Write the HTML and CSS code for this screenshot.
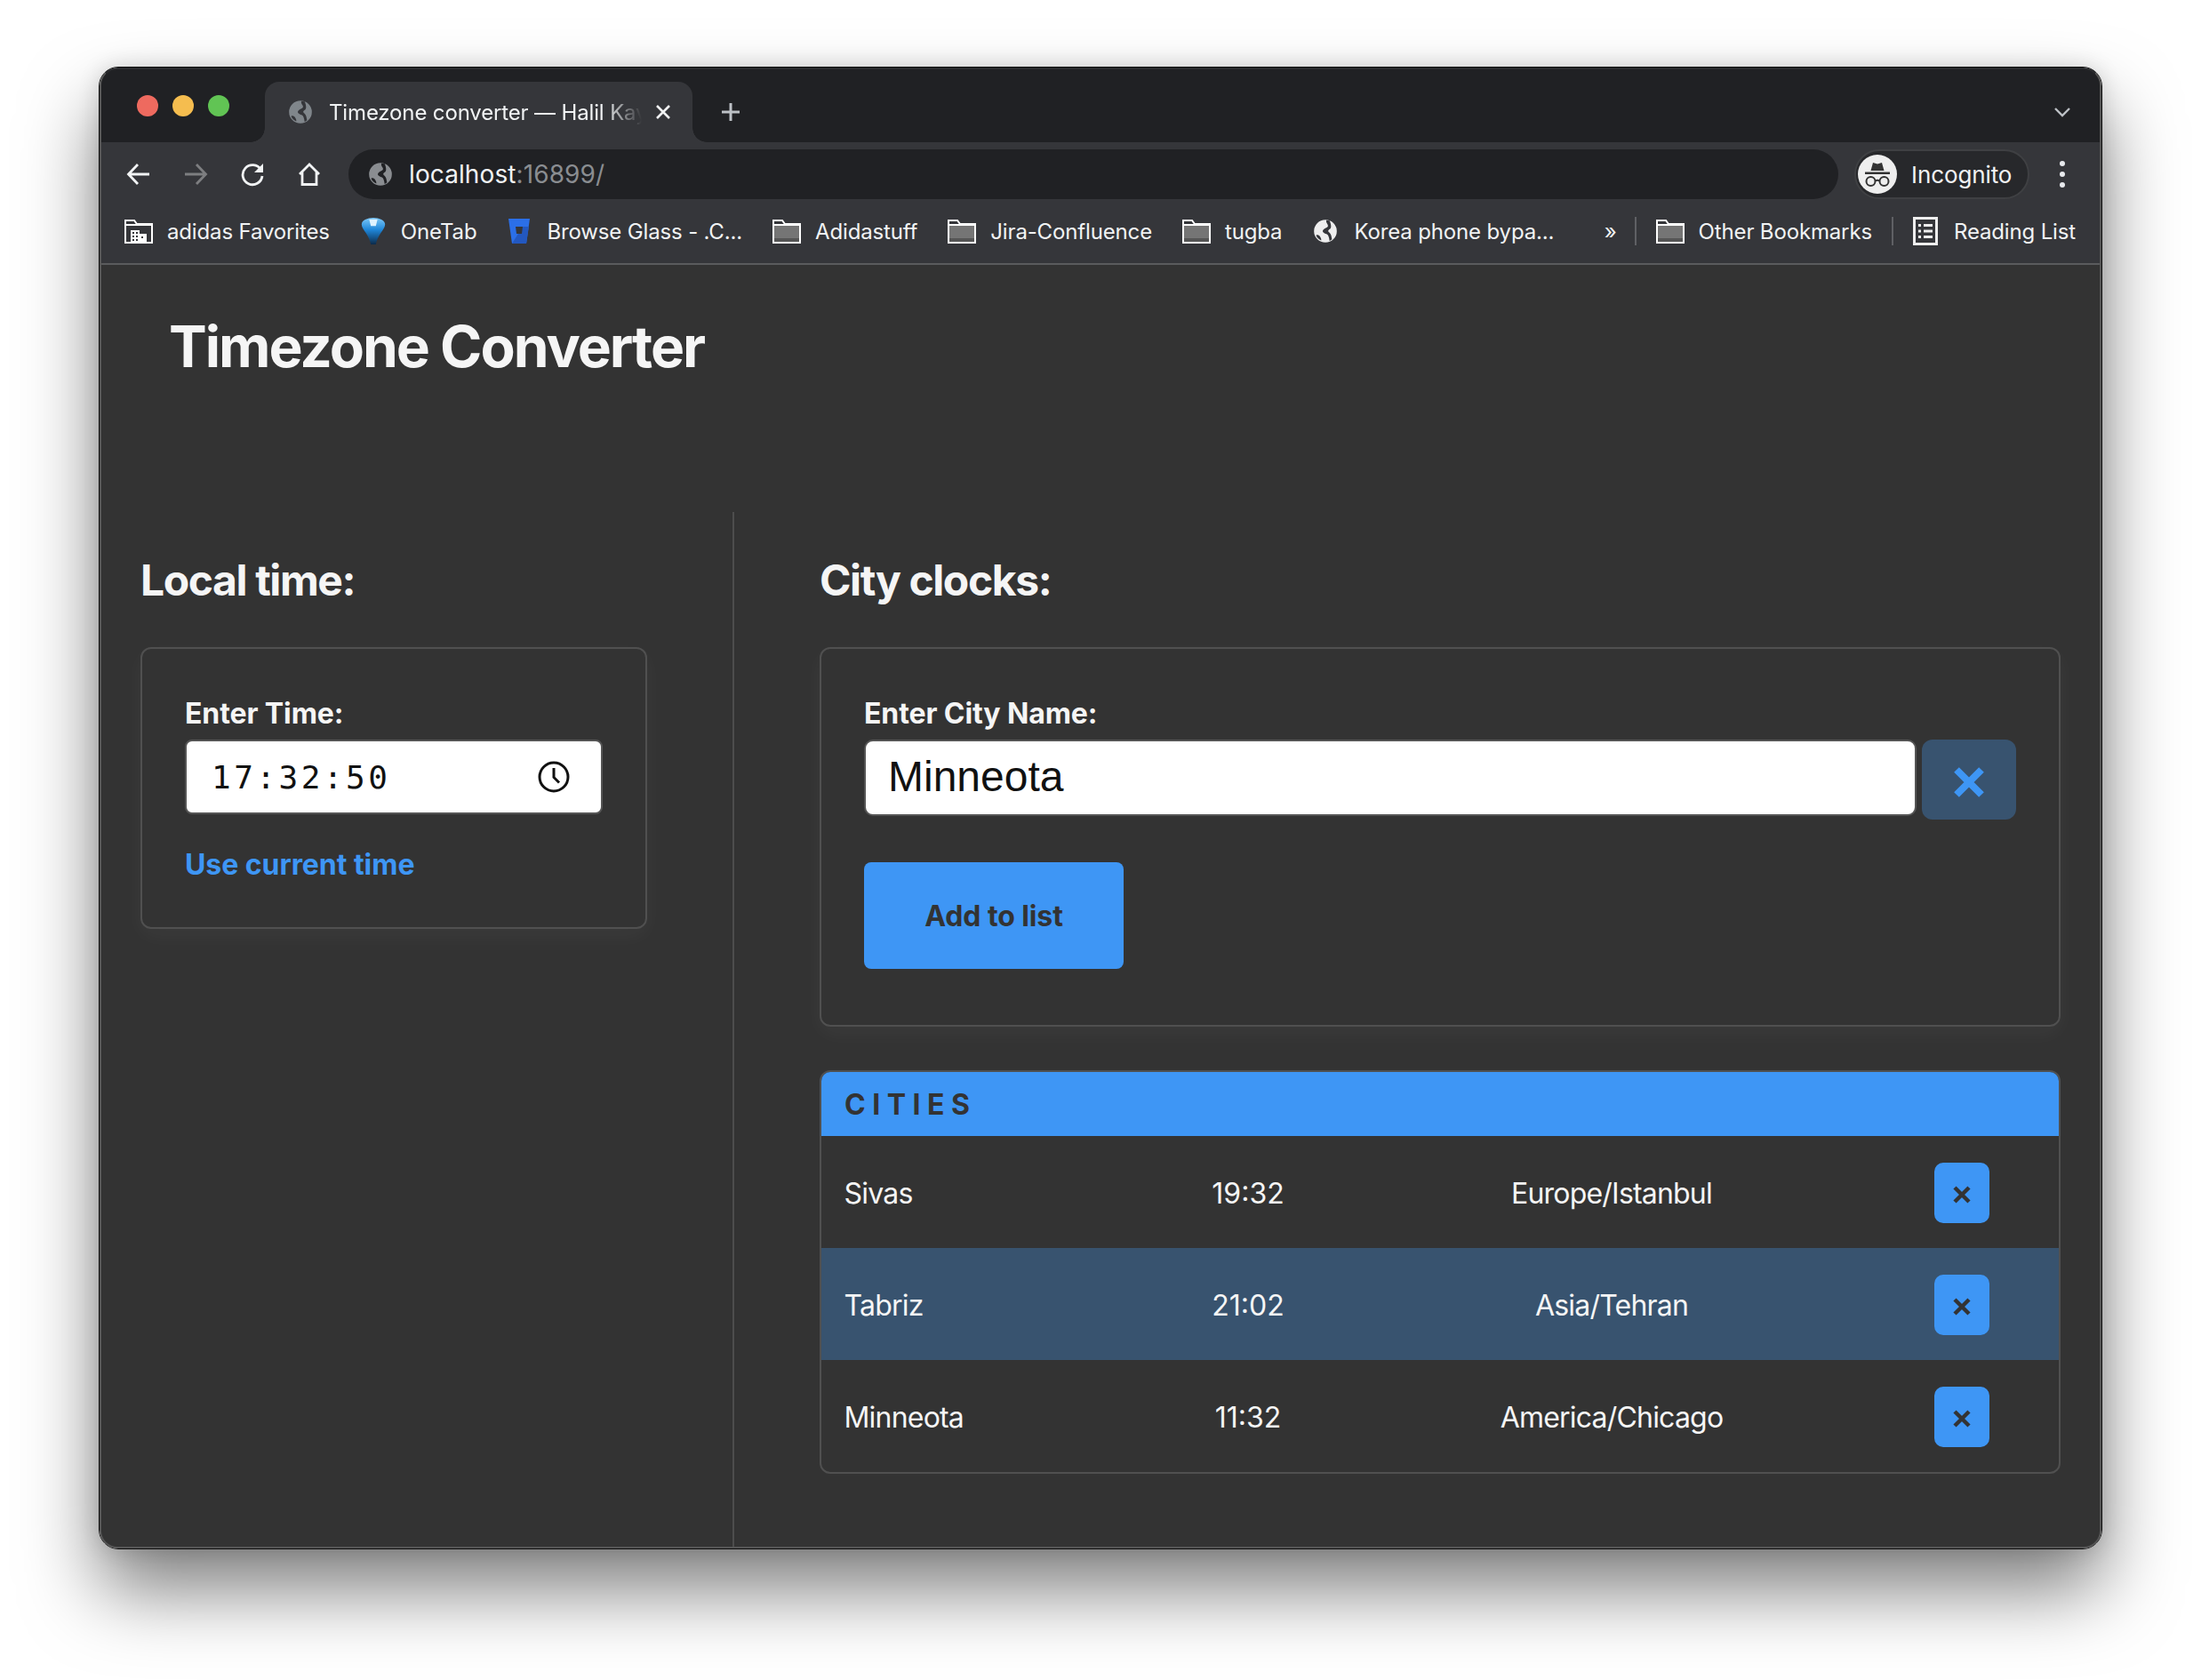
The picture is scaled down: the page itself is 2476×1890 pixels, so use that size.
FILE: index.html
```html
<!DOCTYPE html>
<html lang="en">

<head>
    <meta charset="UTF-8">
    <title>Timezone converter</title>
    <link rel="stylesheet" href="styles.css">
</head>

<body>
    <svg class="defs" width="0" height="0">
        <defs>
            <symbol id="globe" viewBox="0 0 24 24">
                <path fill="currentColor" fill-rule="evenodd" d="M12 1a11 11 0 1 0 0 22a11 11 0 0 0 0-22z M13 1.500C12 4 14.500 5 14.500 7C14.500 8.500 10.500 9 9.500 11.500C9 13.500 12 14.300 13.500 15C15 16 15.500 18 16 21.500C17 21 17.600 20.600 18.300 20C18 17.500 17.500 15 16 13.500C14 12 14.500 11 16.500 9.800C18 8.800 17.500 5 16 2C15 1.700 14 1.600 13 1.500z M3 16C5 15 6 16 7 17.500C8 19 8 20 8 21C5.800 20 4 18.300 3 16z" />
            </symbol>
            <symbol id="folder" viewBox="0 0 32 28">
                <path fill="#757575" d="M2 8h28v18H2z" />
                <path fill="#555" d="M2 22h28v4H2z" />
                <path fill="none" stroke="#fff" stroke-width="2" d="M1 2h10l3 4h17v21H1z M1 7h30" />
            </symbol>
            <linearGradient id="gem" x1="0" y1="0" x2="0" y2="1">
                <stop offset="0" stop-color="#7cc8f8" />
                <stop offset=".45" stop-color="#1f86d8" />
                <stop offset="1" stop-color="#0b2a4a" />
            </linearGradient>
        </defs>
    </svg>

    <div class="window">
        <div class="window-inner">

            <div class="tabstrip">
                <div class="lights">
                    <span class="light red"></span>
                    <span class="light yellow"></span>
                    <span class="light green"></span>
                </div>
                <div class="tab">
                    <svg class="tab-icon"><use href="#globe" /></svg>
                    <span class="tab-title">Timezone converter — Halil Kay</span>
                    <svg class="tab-close" viewBox="0 0 18 18"><path d="M2 2l14 14M16 2L2 16" /></svg>
                </div>
                <div class="new-tab">
                    <svg viewBox="0 0 24 24"><path d="M12 2v20M2 12h20" /></svg>
                </div>
                <div class="tab-menu">
                    <svg viewBox="0 0 20 12"><path d="M2 2l8 8l8-8" /></svg>
                </div>
            </div>

            <div class="toolbar">
                <div class="tool">
                    <svg viewBox="0 0 28 28"><path d="M27 14H4M14 3L3.500 14L14 25" /></svg>
                </div>
                <div class="tool dim">
                    <svg viewBox="0 0 28 28"><path d="M2 14h23M15 3l10.500 11L15 25" /></svg>
                </div>
                <div class="tool">
                    <svg viewBox="0 0 28 28"><path d="M23.500 9A11 11 0 1 0 25 16" /><path class="solid" d="M26 2v10H16z" /></svg>
                </div>
                <div class="tool">
                    <svg viewBox="0 0 28 28"><path d="M2 14L13 3l11 11M5 11.500v14h16v-14" /></svg>
                </div>
                <div class="omnibox">
                    <svg class="omni-icon"><use href="#globe" /></svg>
                    <span class="url">localhost<span class="url-dim">:16899/</span></span>
                </div>
                <div class="profile">
                    <svg class="profile-icon" viewBox="0 0 44 44">
                        <circle cx="22" cy="22" r="22" fill="#eee" />
                        <path fill="#333" d="M14.500 18l2.500-9l5 1.500l5-1.500l2.500 9z" />
                        <path fill="#333" d="M8 19.500h28v2.500H8z" />
                        <g fill="none" stroke="#333" stroke-width="2">
                            <circle cx="14.500" cy="30" r="5" />
                            <circle cx="29.500" cy="30" r="5" />
                            <path d="M19.500 29.500q2.500-1.500 5 0" />
                        </g>
                    </svg>
                    <span>Incognito</span>
                </div>
                <div class="more">
                    <span></span><span></span><span></span>
                </div>
            </div>

            <div class="bookmarks">
                <div class="mark">
                    <svg class="mark-icon" viewBox="0 0 32 28">
                        <path fill="none" stroke="#fff" stroke-width="2" d="M1 2h10l3 4h17v21H1z M1 7h30" />
                        <path fill="#fff" d="M7 13h10v4h8v10H7z" />
                        <path fill="#35363a" d="M9 15h2v2H9zM13 15h2v2h-2zM9 19h2v2H9zM13 19h2v2h-2zM9 23h2v2H9zM13 23h2v2h-2zM19 20h2v2h-2z" />
                    </svg>
                    <span>adidas Favorites</span>
                </div>
                <div class="mark">
                    <svg class="mark-icon gem" viewBox="0 0 30 34">
                        <path fill="url(#gem)" d="M1 9C1 4 8 1 15 1s14 3 14 8c0 6-9 12-11 24h-6C10 21 1 15 1 9z" />
                        <path fill="#dff3ff" d="M10 3h10l-2 8h-6z" />
                    </svg>
                    <span>OneTab</span>
                </div>
                <div class="mark">
                    <svg class="mark-icon bucket" viewBox="0 0 26 32">
                        <path fill="#2b6fe8" d="M1 2h24l-4 28H5z" />
                        <path fill="#2358c0" d="M17 11h7l-3 19H5z" />
                        <path fill="#35363a" d="M9 11h8l-1 8h-6z" />
                    </svg>
                    <span>Browse Glass - .C...</span>
                </div>
                <div class="mark">
                    <svg class="mark-icon"><use href="#folder" /></svg>
                    <span>Adidastuff</span>
                </div>
                <div class="mark">
                    <svg class="mark-icon"><use href="#folder" /></svg>
                    <span>Jira-Confluence</span>
                </div>
                <div class="mark">
                    <svg class="mark-icon"><use href="#folder" /></svg>
                    <span>tugba</span>
                </div>
                <div class="mark">
                    <svg class="mark-icon globe-mark"><use href="#globe" /></svg>
                    <span>Korea phone bypa...</span>
                </div>
                <div class="marks-end">
                    <span class="chevrons">»</span>
                    <span class="mark-sep"></span>
                    <div class="mark">
                        <svg class="mark-icon"><use href="#folder" /></svg>
                        <span>Other Bookmarks</span>
                    </div>
                    <span class="mark-sep"></span>
                    <div class="mark">
                        <svg class="mark-icon list-icon" viewBox="0 0 28 32">
                            <path fill="none" stroke="#eee" stroke-width="3" d="M1.500 1.500h25v29h-25z" />
                            <path fill="#eee" d="M6 8h3v3H6zM12 8h10v3H12zM6 14.500h3v3H6zM12 14.500h10v3H12zM6 21h3v3H6zM12 21h10v3H12z" />
                        </svg>
                        <span>Reading List</span>
                    </div>
                </div>
            </div>

            <main class="content">
                <h1 class="title">Timezone Converter</h1>
                <div class="columns">
                    <section class="col-local">
                        <h2>Local time:</h2>
                        <div class="card card-local">
                            <div class="label">Enter Time:</div>
                            <div class="time-field">
                                <span class="time-value">17:32:50</span>
                                <svg class="clock" viewBox="0 0 36 36">
                                    <circle cx="18" cy="18" r="16" />
                                    <path d="M18 8v10.500l6 6" />
                                </svg>
                            </div>
                            <a class="link" href="#">Use current time</a>
                        </div>
                    </section>

                    <section class="col-cities">
                        <h2>City clocks:</h2>
                        <div class="card card-city">
                            <div class="label">Enter City Name:</div>
                            <div class="city-row">
                                <div class="city-field">Minneota</div>
                                <button class="clear-btn">
                                    <svg viewBox="0 0 34 34"><path d="M3 3l28 28M31 3L3 31" /></svg>
                                </button>
                            </div>
                            <button class="add-btn">Add to list</button>
                        </div>

                        <div class="list">
                            <div class="list-head">CITIES</div>
                            <div class="list-row">
                                <span>Sivas</span>
                                <span class="hour">19:32</span>
                                <span class="zone">Europe/Istanbul</span>
                                <button class="del-btn"><svg viewBox="0 0 20 20"><path d="M2 2l16 16M18 2L2 18" /></svg></button>
                            </div>
                            <div class="list-row alt">
                                <span>Tabriz</span>
                                <span class="hour">21:02</span>
                                <span class="zone">Asia/Tehran</span>
                                <button class="del-btn"><svg viewBox="0 0 20 20"><path d="M2 2l16 16M18 2L2 18" /></svg></button>
                            </div>
                            <div class="list-row">
                                <span>Minneota</span>
                                <span class="hour">11:32</span>
                                <span class="zone">America/Chicago</span>
                                <button class="del-btn"><svg viewBox="0 0 20 20"><path d="M2 2l16 16M18 2L2 18" /></svg></button>
                            </div>
                        </div>
                    </section>
                </div>
            </main>

        </div>
    </div>
</body>

</html>
```

FILE: styles.css
```css
* {
    box-sizing: border-box;
}

html,
body {
    margin: 0;
    background: #fff;
}

body {
    width: 2476px;
    height: 1890px;
    padding: 75px 111px 147px;
    font-family: Inter, "Noto Sans", sans-serif;
    overflow: hidden;
}

.defs {
    display: block;
    height: 0;
}

/* window frame */
.window {
    height: 100%;
    border: 1px solid #0c0c0c;
    border-radius: 22px;
    box-shadow: 0 46px 84px rgba(0, 0, 0, 0.5), 0 0 24px rgba(0, 0, 0, 0.14);
}

.window-inner {
    height: 100%;
    display: flex;
    flex-direction: column;
    border: 2px solid #555;
    border-top-color: #2a2b2e;
    border-radius: 20px;
    overflow: hidden;
    background: #333;
}

/* tab strip */
.tabstrip {
    height: 82px;
    display: flex;
    background: #202124;
    flex-shrink: 0;
}

.lights {
    width: 184px;
    padding: 29px 0 0 40px;
    display: flex;
    gap: 16px;
}

.light {
    width: 24px;
    height: 24px;
    border-radius: 50%;
}

.red {
    background: #ee6a5f;
}

.yellow {
    background: #f5bd4f;
}

.green {
    background: #61c454;
}

.tab {
    position: relative;
    width: 481px;
    height: 68px;
    margin-top: 14px;
    padding-left: 26px;
    display: flex;
    align-items: center;
    background: #35363a;
    border-radius: 16px 16px 0 0;
}

.tab::before,
.tab::after {
    content: "";
    position: absolute;
    bottom: 0;
    width: 16px;
    height: 16px;
}

.tab::before {
    left: -16px;
    background: radial-gradient(circle at 0 0, transparent 15.5px, #35363a 16px);
}

.tab::after {
    right: -16px;
    background: radial-gradient(circle at 100% 0, transparent 15.5px, #35363a 16px);
}

.tab-icon {
    width: 28px;
    height: 28px;
    color: #80868b;
    flex-shrink: 0;
}

.tab-title {
    width: 352px;
    margin-left: 18px;
    color: #f1f3f4;
    font-size: 24px;
    letter-spacing: -0.15px;
    white-space: nowrap;
    overflow: hidden;
    -webkit-mask-image: linear-gradient(to right, #000 88%, transparent 100%);
    mask-image: linear-gradient(to right, #000 88%, transparent 100%);
}

.tab-close {
    width: 18px;
    height: 18px;
    margin-left: 15px;
    fill: none;
    stroke: #f1f3f4;
    stroke-width: 2.600;
}

.new-tab {
    width: 40px;
    height: 68px;
    margin: 14px 0 0 23px;
    display: flex;
    align-items: center;
    justify-content: center;
}

.new-tab svg {
    width: 24px;
    height: 24px;
    fill: none;
    stroke: #bdc1c6;
    stroke-width: 3;
}

.tab-menu {
    width: 40px;
    height: 68px;
    margin: 14px 22px 0 auto;
    display: flex;
    align-items: center;
    justify-content: center;
}

.tab-menu svg {
    width: 20px;
    height: 12px;
    fill: none;
    stroke: #bdc1c6;
    stroke-width: 2.400;
}

/* toolbar */
.toolbar {
    height: 72px;
    padding: 8px 5px 0 9px;
    display: flex;
    align-items: flex-start;
    background: #35363a;
    flex-shrink: 0;
}

.tool {
    width: 64.500px;
    height: 56px;
    display: flex;
    align-items: center;
    justify-content: center;
}

.tool svg {
    width: 28px;
    height: 28px;
    fill: none;
    stroke: #f1f3f4;
    stroke-width: 2.800;
}

.tool .solid {
    fill: #f1f3f4;
    stroke: none;
}

.tool.dim svg {
    stroke: #7d7e80;
}

.omnibox {
    flex: 1;
    height: 56px;
    margin-left: 11px;
    padding-left: 22px;
    display: flex;
    align-items: center;
    background: #202124;
    border-radius: 28px;
}

.omni-icon {
    width: 28px;
    height: 28px;
    color: #8a8d91;
    flex-shrink: 0;
}

.url {
    margin-left: 18px;
    color: #f1f3f4;
    font-size: 28px;
    letter-spacing: 0.1px;
}

.url-dim {
    color: #8a8d91;
}

.profile {
    width: 197px;
    height: 56px;
    margin-left: 18px;
    padding-left: 2px;
    display: flex;
    align-items: center;
    gap: 16px;
    color: #f1f3f4;
    font-size: 26px;
    letter-spacing: -0.1px;
    background: #27282b;
    border: 2px solid #3f4043;
    border-radius: 28px;
}

.profile-icon {
    width: 44px;
    height: 44px;
    flex-shrink: 0;
}

.more {
    width: 74px;
    height: 56px;
    display: flex;
    flex-direction: column;
    align-items: center;
    justify-content: center;
    gap: 6px;
}

.more span {
    width: 6px;
    height: 6px;
    border-radius: 50%;
    background: #e8eaed;
}

/* bookmarks */
.bookmarks {
    height: 66px;
    padding: 0 27px 8px 26px;
    display: flex;
    align-items: center;
    gap: 34px;
    color: #f1f3f4;
    font-size: 24px;
    letter-spacing: -0.15px;
    background: #35363a;
    border-bottom: 2px solid #5a5b5d;
    flex-shrink: 0;
}

.mark {
    display: flex;
    align-items: center;
    gap: 16px;
    white-space: nowrap;
}

.mark-icon {
    width: 32px;
    height: 28px;
    flex-shrink: 0;
}

.mark-icon.gem {
    width: 30px;
    height: 32px;
}

.mark-icon.bucket {
    width: 26px;
    height: 32px;
    margin: 0 2px 0 1px;
}

.mark-icon.globe-mark {
    width: 28px;
    height: 28px;
    margin: 0 2px 0 1px;
    color: #eee;
}

.mark-icon.list-icon {
    width: 28px;
    height: 32px;
    margin-right: 2px;
}

.marks-end {
    margin-left: auto;
    display: flex;
    align-items: center;
    gap: 22px;
}

.chevrons {
    margin-right: -2px;
    font-size: 24px;
}

.mark-sep {
    width: 2px;
    height: 32px;
    background: #5f6064;
}

/* page */
.content {
    flex: 1;
    display: flex;
    flex-direction: column;
    min-height: 0;
    color: #f5f5f5;
}

.title {
    margin: 0;
    padding: 54px 76px 148px;
    font-size: 64px;
    line-height: 76px;
    font-weight: 700;
    letter-spacing: -2px;
}

.columns {
    flex: 1;
    display: flex;
    min-height: 0;
}

.col-local {
    width: 712px;
    padding: 48px 0 0 44px;
    border-right: 2px solid #4d4d4d;
}

.col-cities {
    flex: 1;
    padding: 48px 44px 0 96px;
}

h2 {
    margin: 0 0 46px;
    font-size: 48px;
    line-height: 58px;
    font-weight: 700;
    letter-spacing: -1.400px;
}

.card {
    border: 2px solid #505050;
    border-radius: 12px;
    box-shadow: 0 8px 24px rgba(255, 255, 255, 0.04);
}

.card-local {
    width: 570px;
    padding: 53px 49px 50px 48px;
}

.card-city {
    padding: 53px 48px 63px 48px;
}

.label {
    margin-bottom: 9px;
    font-size: 32px;
    line-height: 40px;
    font-weight: 700;
    letter-spacing: -0.1px;
}

.time-field {
    width: 470px;
    height: 84px;
    padding: 0 35px 0 28px;
    display: flex;
    align-items: center;
    justify-content: space-between;
    background: #fff;
    border: 2px solid #555;
    border-radius: 8px;
}

.time-value {
    color: #111;
    font-family: "DejaVu Sans Mono", "Liberation Mono", monospace;
    font-size: 36px;
    letter-spacing: 3.500px;
}

.clock {
    width: 36px;
    height: 36px;
    fill: none;
    stroke: #111;
    stroke-width: 3;
}

.link {
    display: block;
    margin-top: 37px;
    color: #3e96f5;
    font-size: 32px;
    line-height: 40px;
    font-weight: 700;
    letter-spacing: -0.05px;
    text-decoration: none;
}

.city-row {
    height: 90px;
    display: flex;
    align-items: flex-start;
    gap: 6px;
}

.city-field {
    flex: 1;
    height: 86px;
    padding: 0 0 3px 25px;
    display: flex;
    align-items: center;
    color: #111;
    font-family: "Liberation Sans", Arial, sans-serif;
    font-size: 48px;
    background: #fff;
    border: 2px solid #555;
    border-radius: 10px;
}

.clear-btn {
    width: 106px;
    height: 90px;
    padding: 6px 0 0;
    display: flex;
    align-items: center;
    justify-content: center;
    background: #38536f;
    border: 0;
    border-radius: 12px;
}

.clear-btn svg {
    width: 34px;
    height: 34px;
    fill: none;
    stroke: #3e96f5;
    stroke-width: 8;
}

.add-btn {
    display: block;
    width: 292px;
    height: 120px;
    margin-top: 48px;
    color: #333;
    font-family: inherit;
    font-size: 32px;
    font-weight: 700;
    letter-spacing: -0.1px;
    background: #3e96f5;
    border: 0;
    border-radius: 8px;
}

/* city list */
.list {
    margin-top: 49px;
    border: 2px solid #505050;
    border-radius: 12px;
    overflow: hidden;
}

.list-head {
    height: 72px;
    padding-left: 26px;
    display: flex;
    align-items: center;
    color: #333;
    font-size: 32px;
    font-weight: 700;
    letter-spacing: 7.500px;
    background: #3e96f5;
}

.list-row {
    height: 126px;
    padding: 2px 78px 0 25.500px;
    display: grid;
    grid-template-columns: 249.500px 410px 408px 1fr;
    align-items: center;
    font-size: 32px;
    letter-spacing: -0.8px;
}

.list-row.alt {
    background: #38536f;
}

.hour {
    text-align: center;
    letter-spacing: 0;
}

.zone {
    text-align: center;
}

.del-btn {
    width: 62px;
    height: 68px;
    padding: 3px 0 0;
    justify-self: end;
    display: flex;
    align-items: center;
    justify-content: center;
    background: #3e96f5;
    border: 0;
    border-radius: 10px;
}

.del-btn svg {
    width: 20px;
    height: 20px;
    fill: none;
    stroke: #333;
    stroke-width: 4.500;
}
```
